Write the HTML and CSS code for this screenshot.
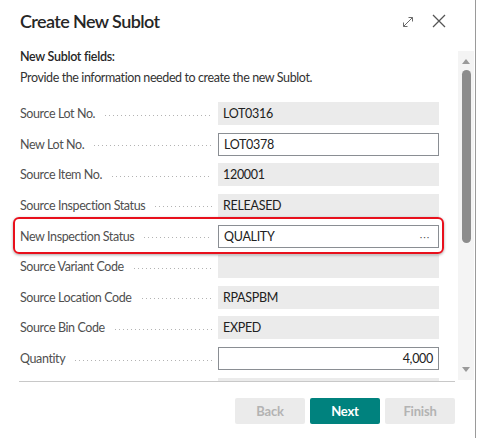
FILE: index.html
```html
<!DOCTYPE html>
<html>
<head>
<meta charset="utf-8">
<link rel="stylesheet" href="styles.css">
</head>
<body>
<div class="dialog">
  <div class="header">
    <h1 class="title">Create New Sublot</h1>
    <div class="actions">
      <svg class="icon-expand" width="12" height="12" viewBox="0 0 12 12">
        <path d="M1.5 10.5 L10.5 1.5 M6.5 1.5 H10.5 V5.5 M1.5 6.5 V10.5 H5.5" fill="none" stroke="#6b6b6b" stroke-width="1"/>
      </svg>
      <svg class="icon-close" width="14" height="14" viewBox="0 0 14 14">
        <path d="M1 1 L13 13 M13 1 L1 13" fill="none" stroke="#555" stroke-width="1.3"/>
      </svg>
    </div>
  </div>
  <div class="main">
    <div class="content">
      <div class="group-title">New Sublot fields:</div>
      <div class="instructions">Provide the information needed to create the new Sublot.</div>
      <div class="fields">
        <div class="row"><span class="label">Source Lot No.</span><span class="leader"></span><div class="box ro">LOT0316</div></div>
        <div class="row"><span class="label">New Lot No.</span><span class="leader"></span><div class="box edit">LOT0378</div></div>
        <div class="row"><span class="label">Source Item No.</span><span class="leader"></span><div class="box ro">120001</div></div>
        <div class="row"><span class="label">Source Inspection Status</span><span class="leader"></span><div class="box ro">RELEASED</div></div>
        <div class="row"><span class="label">New Inspection Status</span><span class="leader"></span><div class="box edit lookup"><span>QUALITY</span><span class="dots">···</span></div></div>
        <div class="row"><span class="label">Source Variant Code</span><span class="leader"></span><div class="box ro"></div></div>
        <div class="row"><span class="label">Source Location Code</span><span class="leader"></span><div class="box ro">RPASPBM</div></div>
        <div class="row"><span class="label">Source Bin Code</span><span class="leader"></span><div class="box ro">EXPED</div></div>
        <div class="row"><span class="label">Quantity</span><span class="leader"></span><div class="box edit num">4,000</div></div>
        <div class="row"><span class="label"></span><span class="leader blank"></span><div class="box ro"></div></div>
      </div>
    </div>
    <div class="scrollbar">
      <span class="arrow up"></span>
      <div class="track"><div class="thumb"></div></div>
      <span class="arrow down"></span>
    </div>
  </div>
  <div class="footer">
    <button class="btn disabled">Back</button>
    <button class="btn primary">Next</button>
    <button class="btn disabled">Finish</button>
  </div>
  <div class="highlight"></div>
</div>
</body>
</html>
```
FILE: styles.css
```css
html, body {
  margin: 0;
  padding: 0;
  background: #ffffff;
}
body {
  font-family: Lato, "Open Sans", sans-serif;
  color: #212121;
}
.dialog {
  position: relative;
  width: 475px;
  height: 438px;
  border-right: 1px solid #9a9a9a;
  background: #fff;
  display: flex;
  flex-direction: column;
  overflow: hidden;
}
.header {
  height: 48px;
  flex: none;
  display: flex;
  align-items: flex-start;
  justify-content: space-between;
  padding: 0 29px 0 20px;
}
.title {
  margin: 0;
  margin-top: 7px;
  font-size: 18px;
  line-height: 28px;
  font-weight: 600;
  letter-spacing: -0.6px;
  color: #262626;
}
.actions {
  display: flex;
  align-items: center;
  gap: 18px;
  margin-top: 14px;
}
.icon-expand { margin-top: 1px; }
.main {
  height: 333px;
  flex: none;
  display: flex;
}
.content {
  flex: 1;
  padding-left: 20px;
  padding-right: 20px;
  overflow: hidden;
}
.group-title {
  font-size: 12.5px;
  line-height: 18px;
  font-weight: 600;
  letter-spacing: -0.3px;
  color: #262626;
}
.instructions {
  margin-top: 3px;
  font-size: 12.5px;
  line-height: 18px;
  letter-spacing: -0.4px;
  color: #333;
}
.fields {
  margin-top: 15px;
  display: flex;
  flex-direction: column;
  gap: 7.625px;
}
.row {
  display: flex;
  align-items: center;
  height: 23px;
  flex: none;
}
.label {
  font-size: 12.5px;
  letter-spacing: -0.4px;
  color: #505050;
  white-space: nowrap;
}
.leader {
  flex: 1;
  height: 1px;
  margin: 3px 6px 0 10px;
  background-image: linear-gradient(to right, #b3b3b3 1px, transparent 1px);
  background-size: 4px 1px;
  background-repeat: repeat-x;
}
.leader.blank { background: none; }
.box {
  width: 221px;
  height: 23px;
  box-sizing: border-box;
  flex: none;
  font-size: 12.5px;
  letter-spacing: -0.3px;
  line-height: 21px;
  padding: 0 5px;
  color: #212121;
  display: flex;
  align-items: center;
}
.box.ro {
  background: #ebebeb;
}
.box.edit {
  background: #fff;
  border: 1px solid #8a8e93;
}
.box.num { justify-content: flex-end; }
.box.lookup { justify-content: space-between; }
.dots {
  color: #444;
  font-weight: 300;
  letter-spacing: 0.5px;
  margin-right: 3px;
}
.scrollbar {
  width: 16px;
  flex: none;
  margin-top: 3px;
  margin-left: -1px;
  margin-right: 1px;
  height: 329px;
  background: #f4f4f4;
  display: flex;
  flex-direction: column;
  align-items: center;
  box-sizing: border-box;
  padding: 8px 0;
}
.arrow {
  width: 0;
  height: 0;
  border-left: 4px solid transparent;
  border-right: 4px solid transparent;
  flex: none;
}
.arrow.up { border-bottom: 5px solid #9a9a9a; }
.arrow.down { border-top: 5px solid #9a9a9a; }
.track {
  flex: 1;
  width: 100%;
  display: flex;
  justify-content: center;
  padding-top: 6px;
}
.thumb {
  width: 9px;
  height: 173px;
  border-radius: 5px;
  background: #8c8c8c;
}
.footer {
  flex: none;
  margin: 0 20px 0 19px;
  border-top: 1px solid #c8c8c8;
  padding-top: 16px;
  display: flex;
  justify-content: flex-end;
  gap: 5px;
}
.btn {
  width: 70px;
  height: 26px;
  border: none;
  border-radius: 2px;
  font-family: Lato, "Open Sans", sans-serif;
  font-size: 13px;
  font-weight: 700;
  letter-spacing: -0.2px;
  padding: 0;
}
.btn.disabled {
  background: #ebebeb;
  color: #b3b3b3;
}
.btn.primary {
  background: #00827e;
  color: #fff;
}
.highlight {
  position: absolute;
  left: 13px;
  top: 217px;
  width: 431px;
  height: 37px;
  box-sizing: border-box;
  border: 2px solid #e8101c;
  border-radius: 6px;
  box-shadow: 0 1px 3px rgba(0,0,0,0.35);
  pointer-events: none;
}
```
